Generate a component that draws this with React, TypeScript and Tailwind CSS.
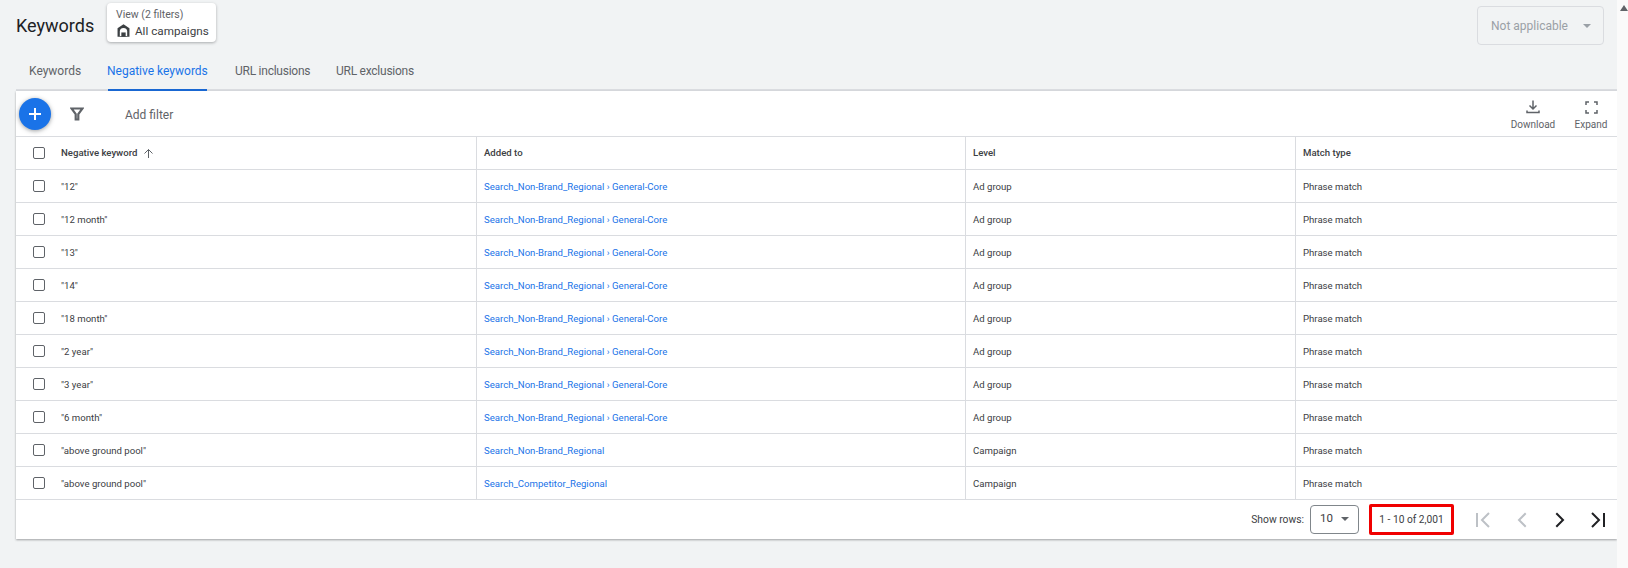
import { ChevronLeft, ChevronRight } from "lucide-react";

const rows = [
  { keyword: '"12"', addedTo: "Search_Non-Brand_Regional › General-Core", level: "Ad group" },
  { keyword: '"12 month"', addedTo: "Search_Non-Brand_Regional › General-Core", level: "Ad group" },
  { keyword: '"13"', addedTo: "Search_Non-Brand_Regional › General-Core", level: "Ad group" },
  { keyword: '"14"', addedTo: "Search_Non-Brand_Regional › General-Core", level: "Ad group" },
  { keyword: '"18 month"', addedTo: "Search_Non-Brand_Regional › General-Core", level: "Ad group" },
  { keyword: '"2 year"', addedTo: "Search_Non-Brand_Regional › General-Core", level: "Ad group" },
  { keyword: '"3 year"', addedTo: "Search_Non-Brand_Regional › General-Core", level: "Ad group" },
  { keyword: '"6 month"', addedTo: "Search_Non-Brand_Regional › General-Core", level: "Ad group" },
  { keyword: '"above ground pool"', addedTo: "Search_Non-Brand_Regional", level: "Campaign" },
  { keyword: '"above ground pool"', addedTo: "Search_Competitor_Regional", level: "Campaign" },
];

function Checkbox() {
  return <div className="w-[12px] h-[12px] rounded-[2px] border-[1.5px] border-[#5f6368] shrink-0" />;
}

export default function App() {
  return (
    <div className="h-[568px] bg-[#f1f3f4] flex font-['Roboto',sans-serif] overflow-hidden">
      <main className="w-[1617px] pl-[16px] flex flex-col">
        <header className="h-[53px] flex items-start">
          <h1 className="text-[18px] leading-[24px] text-[#202124] mt-[14px] w-[91px]">Keywords</h1>
          <button className="mt-[3px] w-[109px] h-[39px] bg-white rounded-[4px] shadow-[0_1px_3px_rgba(60,64,67,0.4)] pl-[9px] text-left">
            <div className="text-[10.500px] leading-[13px] text-[#5f6368] mt-[1px]">View (2 filters)</div>
            <div className="flex items-center gap-[5px] mt-[2px] pl-[1px]">
              <svg width="13" height="13" viewBox="0 0 12 12">
                <path fill="#3c4043" d="M6 0.300 0.500 4V11.700H11.500V4L6 0.300Z" />
                <path fill="white" d="M2.600 11V7A3.400 3.400 0 0 1 9.400 7V11H2.600Z" />
                <path fill="#3c4043" d="M4 11.700V7.800H8V11.700H4Z" />
              </svg>
              <span className="text-[11.700px] leading-[16px] text-[#3c4043]">All campaigns</span>
            </div>
          </button>
          <div className="ml-auto mr-[13px] mt-[6px] w-[127px] h-[39px] rounded-[4px] border border-[#dadce0] flex items-center justify-between pl-[13px] pr-[12px]">
            <span className="text-[12px] text-[#9aa0a6]">Not applicable</span>
            <span className="w-0 h-0 border-x-[4px] border-x-transparent border-t-[4px] border-t-[#9aa0a6]" />
          </div>
        </header>

        <nav className="h-[38px] flex border-b-2 border-[#dadce0] pl-[13px] text-[12px] leading-[36px] text-[#5f6368]">
          <div className="w-[78px] h-[36px]">Keywords</div>
          <div className="w-[128px] h-[38px] text-[#1a73e8]">
            <span className="inline-block h-[38px] relative">
              Negative keywords
              <span className="absolute left-[1px] right-[1px] bottom-0 h-[2px] bg-[#1967d2]" />
            </span>
          </div>
          <div className="w-[101px] h-[36px] tracking-[-0.25px]">URL inclusions</div>
          <div className="h-[36px] tracking-[-0.25px]">URL exclusions</div>
        </nav>

        <section className="bg-white shadow-[0_1px_2px_rgba(60,64,67,0.45)] text-[9.600px] text-[#3c4043]">
          <div className="h-[45px] flex items-center">
            <div className="ml-[3px] w-[32px] h-[32px] rounded-full bg-[#1a73e8] shadow-[0_1px_4px_rgba(60,64,67,0.5)] flex items-center justify-center">
              <svg width="14" height="14" viewBox="0 0 14 14" stroke="white" strokeWidth="2">
                <path d="M7 1v12M1 7h12" />
              </svg>
            </div>
            <svg className="ml-[19px]" width="14" height="14" viewBox="0 0 14 14" fill="none" stroke="#5f6368" strokeWidth="2.200">
              <path d="M1.500 1.500h11L8.300 7v5.500H5.700V7L1.500 1.500Z" />
            </svg>
            <span className="ml-[41px] mt-[2px] text-[12px] text-[#5f6368]">Add filter</span>
            <div className="ml-auto self-start pt-[9px] flex text-[#5f6368] text-[10px] leading-[14px]">
              <div className="flex flex-col items-center w-[44px] mr-[20px]">
                <svg width="14" height="14" viewBox="0 0 14 14" fill="none" stroke="#5f6368" strokeWidth="1.500">
                  <path d="M7 0.500v8M3.500 5.500 7 9l3.500-3.500M1 10.500v2h12v-2" />
                </svg>
                <span className="mt-[4px]">Download</span>
              </div>
              <div className="flex flex-col items-center w-[32px] mr-[10px]">
                <svg className="mt-[1px]" width="13" height="13" viewBox="0 0 13 13" fill="none" stroke="#5f6368" strokeWidth="1.500">
                  <path d="M1 4V1h3M9 1h3v3M12 9v3H9M4 12H1V9" />
                </svg>
                <span className="mt-[4px]">Expand</span>
              </div>
            </div>
          </div>

          <div className="grid grid-cols-[461px_489px_330px_1fr] h-[33px] border-t border-[#dadce0] font-medium items-stretch">
            <div className="flex items-center pl-[17px] border-r border-[#dadce0]">
              <Checkbox />
              <span className="ml-[16px]">Negative keyword</span>
              <svg className="ml-[6px]" width="11" height="11" viewBox="0 0 11 11" fill="none" stroke="#5f6368" strokeWidth="1">
                <path d="M5.500 10V1.500M1.500 5.500l4-4 4 4" />
              </svg>
            </div>
            <div className="flex items-center pl-[7px] border-r border-[#dadce0]">Added to</div>
            <div className="flex items-center pl-[7px] border-r border-[#dadce0]">Level</div>
            <div className="flex items-center pl-[7px]">Match type</div>
          </div>

          {rows.map((row, i) => (
            <div key={i} className="grid grid-cols-[461px_489px_330px_1fr] h-[33px] border-t border-[#dadce0] items-stretch">
              <div className="flex items-center pl-[17px] border-r border-[#dadce0]">
                <Checkbox />
                <span className="ml-[16px] mt-[2px]">{row.keyword}</span>
              </div>
              <div className="flex items-center pl-[7px] pt-[2px] border-r border-[#dadce0] text-[#1a73e8]">{row.addedTo}</div>
              <div className="flex items-center pl-[7px] pt-[2px] border-r border-[#dadce0]">{row.level}</div>
              <div className="flex items-center pl-[7px] pt-[2px]">Phrase match</div>
            </div>
          ))}

          <footer className="h-[40px] flex items-center justify-end border-t border-[#dadce0]">
            <span className="text-[10.300px] mr-[6px]">Show rows:</span>
            <div className="w-[49px] h-[29px] -mt-[1px] border border-[#80868b] rounded-[4px] flex items-center justify-between px-[9px] text-[11.500px] mr-[10px]">
              10
              <span className="w-0 h-0 border-x-[4px] border-x-transparent border-t-[4px] border-t-[#5f6368]" />
            </div>
            <div className="w-[85px] h-[31px] border-[3px] border-[#f00000] rounded-[2px] flex items-center justify-center text-[10.200px] mr-[17px]">
              1 - 10 of 2,001
            </div>
            <svg width="24" height="24" viewBox="0 0 24 24" fill="none" stroke="#bdc1c6" strokeWidth="2" className="mr-[15px]">
              <path d="M6 5v14M18 5l-7 7 7 7" />
            </svg>
            <ChevronLeft size={24} color="#bdc1c6" strokeWidth={2} strokeLinecap="square" strokeLinejoin="miter" className="mr-[14px]" />
            <ChevronRight size={24} color="#202124" strokeWidth={2} strokeLinecap="square" strokeLinejoin="miter" className="mr-[14px]" />
            <svg width="24" height="24" viewBox="0 0 24 24" fill="none" stroke="#202124" strokeWidth="2" className="mr-[7px]">
              <path d="M18 5v14M6 5l7 7-7 7" />
            </svg>
          </footer>
        </section>
      </main>

      <aside className="w-[11px] bg-[#fafafa] flex justify-end pt-[5px] shrink-0">
        <span className="w-0 h-0 border-x-[4px] border-x-transparent border-b-[6px] border-b-[#5f6368]" />
      </aside>
    </div>
  );
}
